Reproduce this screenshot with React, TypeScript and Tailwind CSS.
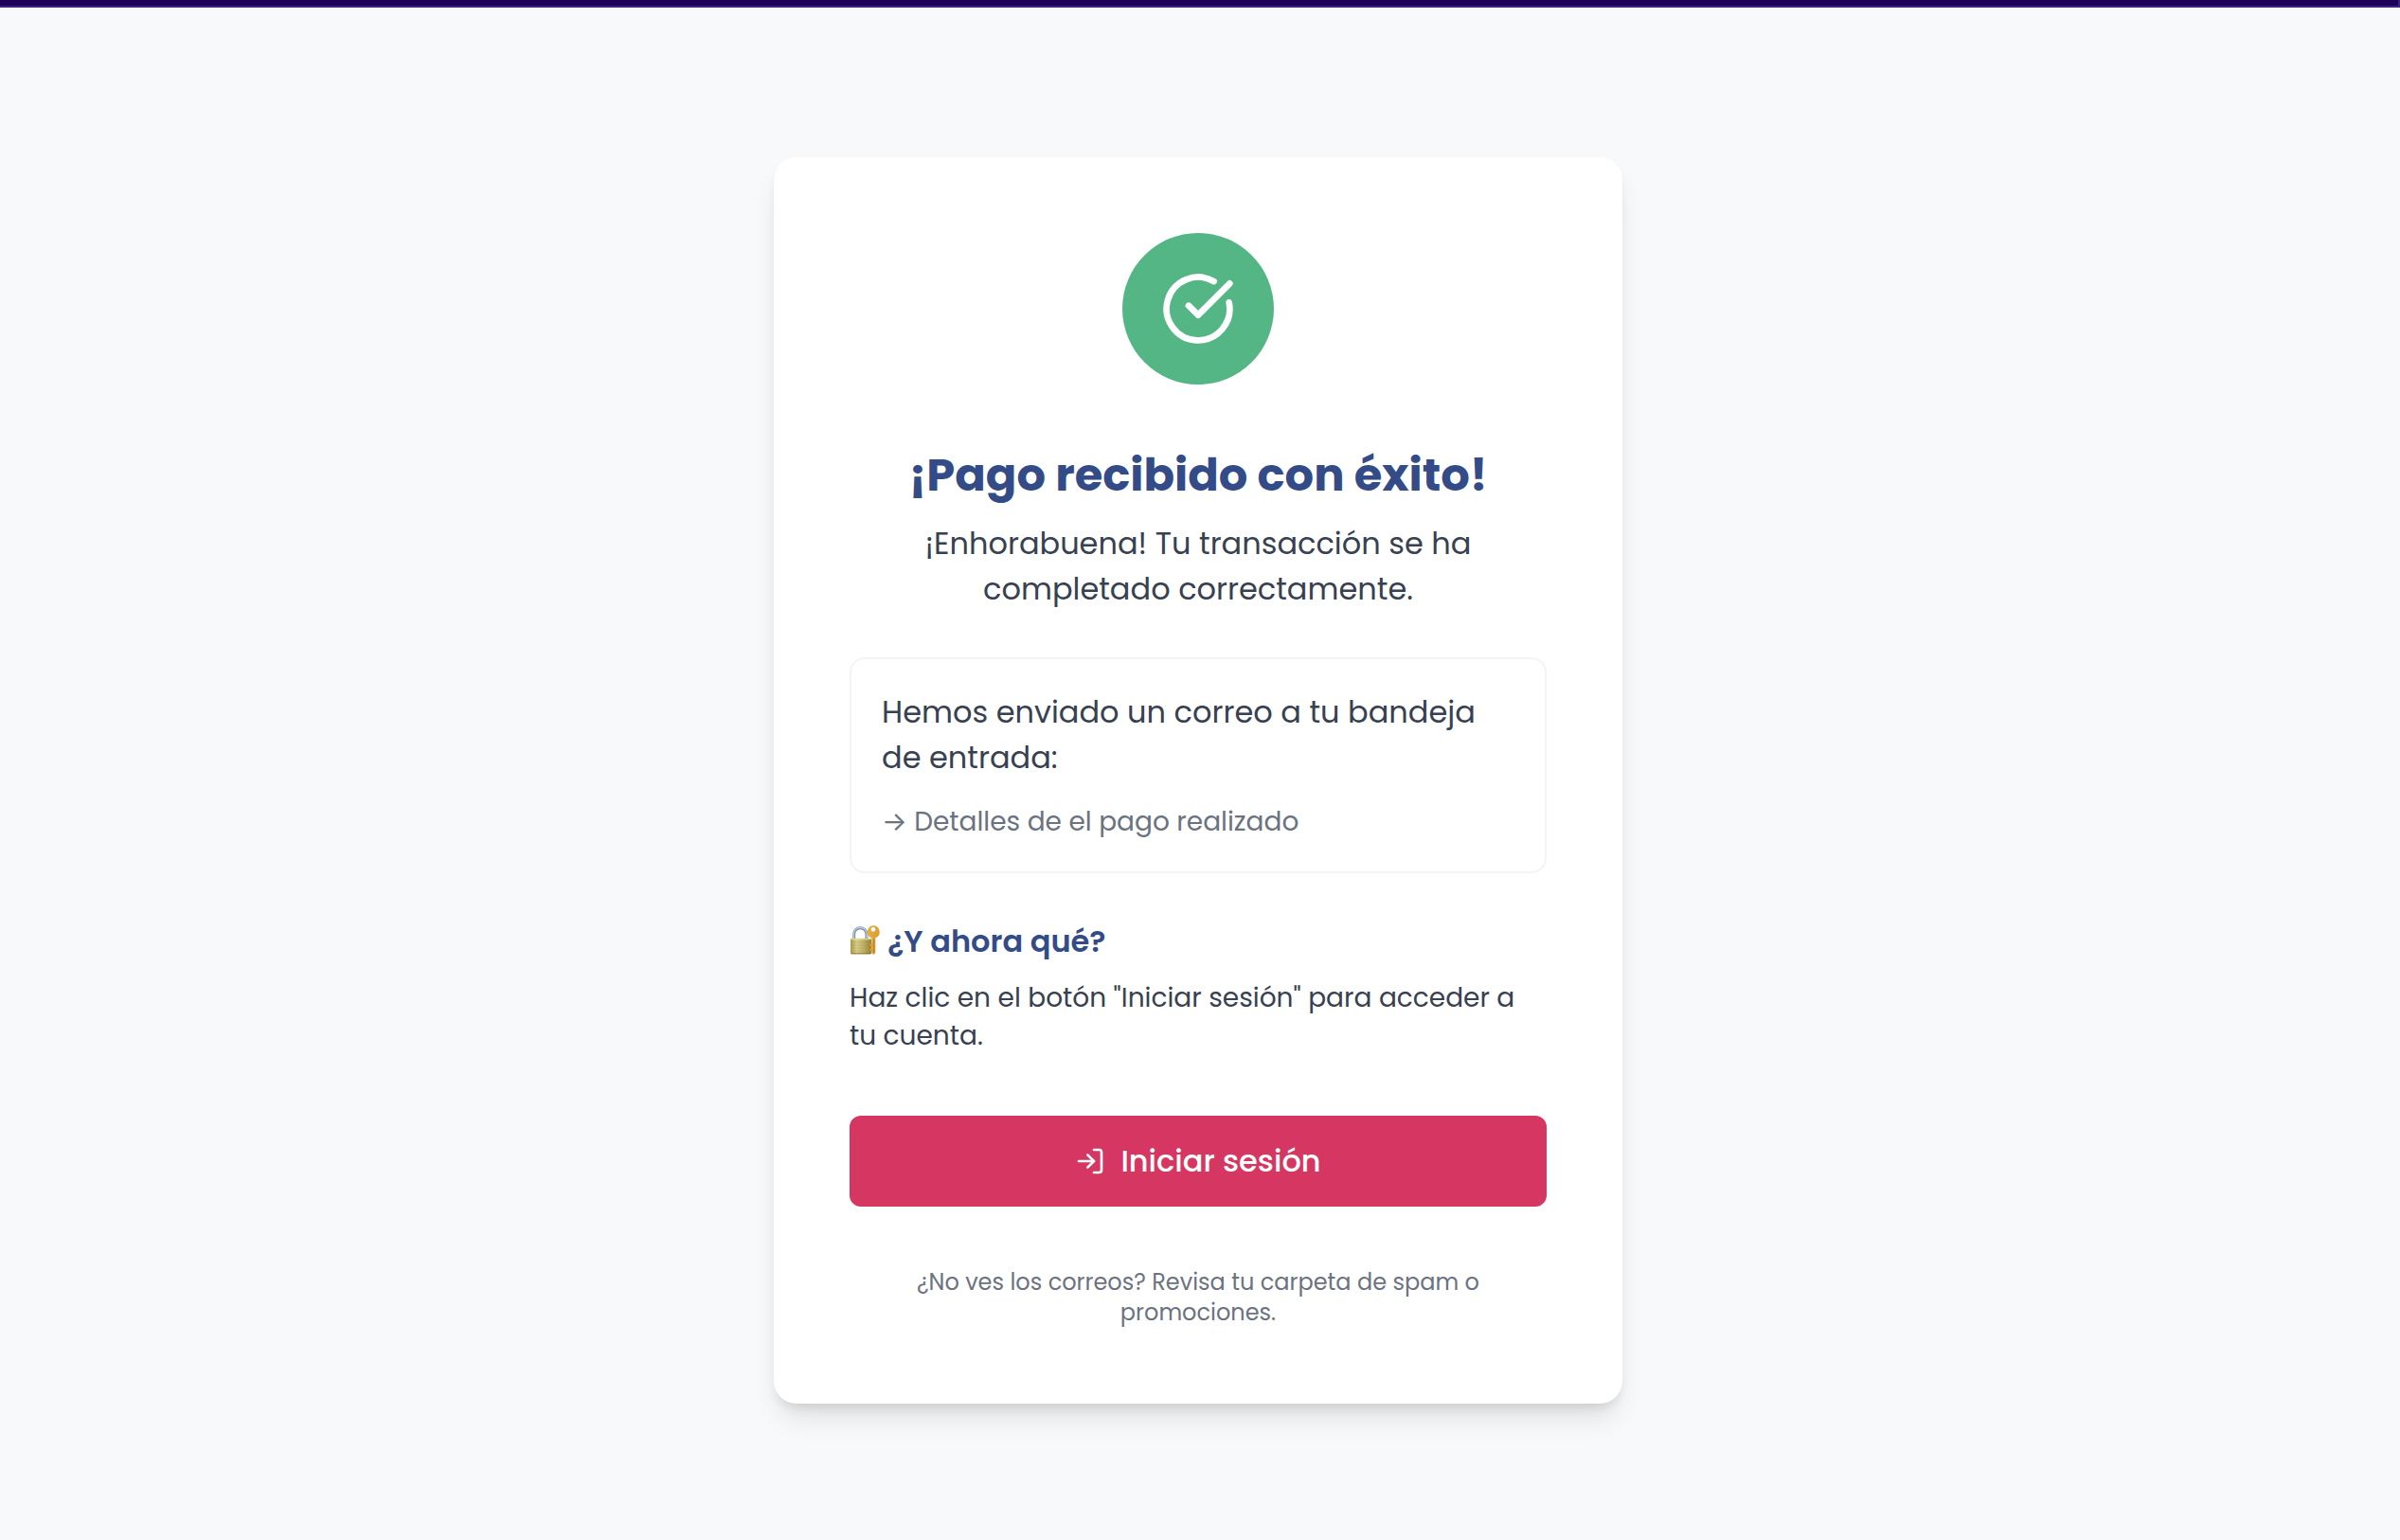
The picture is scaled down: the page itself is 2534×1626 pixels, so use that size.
import React from 'react';
import { CircleCheckBig, LogIn } from 'lucide-react';

function LockWithKey() {
  return (
    <svg viewBox="0 0 96 96" className="mb-1 size-8 shrink-0" role="img" aria-label="Candado con llave">
      <defs>
        <linearGradient id="brass" x1="0" x2="1" y1="0" y2="0">
          <stop offset="0" stopColor="#a89a4a" />
          <stop offset="0.3" stopColor="#d9cf8c" />
          <stop offset="0.6" stopColor="#c2b566" />
          <stop offset="1" stopColor="#8f8136" />
        </linearGradient>
        <linearGradient id="gold" x1="0" x2="1" y1="0" y2="1">
          <stop offset="0" stopColor="#e8b245" />
          <stop offset="1" stopColor="#d2922a" />
        </linearGradient>
      </defs>
      <path d="M14 48V31a20 20 0 0 1 40 0v17" fill="none" stroke="#7d8ea6" strokeWidth="9" />
      <path d="M13 48V31a21 21 0 0 1 42 0v17" fill="none" stroke="#bccbdd" strokeWidth="4" />
      <rect x="3" y="44" width="66" height="50" rx="4" fill="url(#brass)" />
      <path d="M4 47h64" stroke="#e6dfa8" strokeWidth="3" />
      <path d="M4 57h64M4 66h64M4 75h64M4 84h64" stroke="#a09246" strokeWidth="1.5" opacity="0.6" />
      <path d="M5 92.500h62" stroke="#80722e" strokeWidth="3" />
      <path
        fillRule="evenodd"
        d="M75 4a20 20 0 0 1 7 38.700V90l-6 6-6-5v-5l-5-2v-7l5-2v-4l-5-2v-7l5-2V42.900A20 20 0 0 1 75 4Zm0 5a7 7 0 1 0 0 14 7 7 0 0 0 0-14Z"
        fill="url(#gold)"
      />
      <path d="M77 46v45" stroke="#b67a1e" strokeWidth="2.500" />
    </svg>
  );
}

export default function App() {
  return (
    <div className="flex min-h-screen flex-col bg-[#f8f9fb] font-['Poppins','Inter',sans-serif] text-[#374151]">
      <header className="h-2 border-r-2 border-b-2 border-[#3d2380] bg-[#1e0059]" />
      <main className="flex flex-1 items-start justify-center pt-[158px] pr-1">
        <section className="w-full max-w-4xl rounded-3xl bg-white p-20 shadow-[0_20px_30px_-6px_rgba(0,0,0,0.1),0_8px_12px_-4px_rgba(0,0,0,0.1)]">
          <div className="mx-auto mb-16 flex size-40 items-center justify-center rounded-full bg-[#55b685]">
            <CircleCheckBig className="size-20 text-white" strokeWidth={2} />
          </div>

          <h1 className="mb-4 text-center text-5xl leading-16 font-bold text-[#334c88]">
            ¡Pago recibido con éxito!
          </h1>
          <p className="mb-12 text-center text-[32px] leading-12">
            ¡Enhorabuena! Tu transacción se ha completado correctamente.
          </p>

          <div className="mb-12 rounded-2xl border-2 border-[#f3f4f6] p-8">
            <p className="mb-6 text-[32px] leading-12">Hemos enviado un correo a tu bandeja de entrada:</p>
            <ul>
              <li className="text-[28px] leading-10 text-[#6b7280]">→ Detalles de el pago realizado</li>
            </ul>
          </div>

          <h2 className="mb-4 flex items-center gap-2 text-[32px] leading-12 font-semibold text-[#334c88]">
            <LockWithKey />
            ¿Y ahora qué?
          </h2>
          <p className="mb-16 text-[28px] leading-10">
            Haz clic en el botón "Iniciar sesión" para acceder a tu cuenta.
          </p>

          <button
            type="button"
            className="flex h-24 w-full items-center justify-center gap-4 rounded-xl bg-[#d53762] text-[32px] leading-12 font-medium text-white"
          >
            <LogIn className="size-8" strokeWidth={2} />
            Iniciar sesión
          </button>

          <p className="mt-16 text-center text-2xl text-[#6b7280]">
            ¿No ves los correos? Revisa tu carpeta de spam o promociones.
          </p>
        </section>
      </main>
    </div>
  );
}
